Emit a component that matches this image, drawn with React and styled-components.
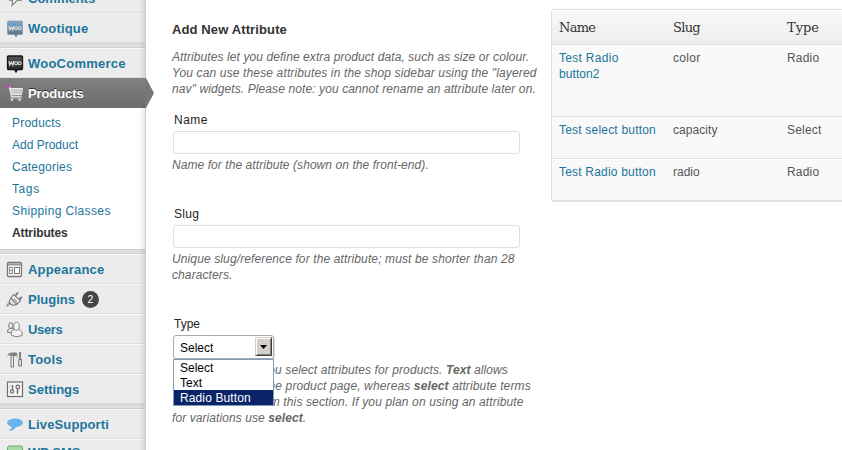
import React from "react";
import styled, { createGlobalStyle, css } from "styled-components";

const Global = createGlobalStyle`
  * { box-sizing: border-box; }
  html, body { margin: 0; background: #fff; overflow: hidden; }
  body { font-family: "Liberation Sans", Arial, sans-serif; font-size: 12px; color: #333; }
`;

const Page = styled.div`
  display: flex;
  width: 842px;
  height: 450px;
  overflow: hidden;
`;

const Sidebar = styled.nav`
  flex: none;
  position: relative;
  width: 146px;
  height: 467px;
  margin-top: -17px;
  background: #ececec;
  border-right: 1px solid #ccc;
  &::after {
    content: "";
    position: absolute;
    top: 0;
    right: 0;
    bottom: 0;
    width: 6px;
    background: linear-gradient(to right, rgba(0, 0, 0, 0), rgba(0, 0, 0, 0.09));
  }
`;

const Item = styled.a`
  display: flex;
  align-items: center;
  height: 30px;
  padding: ${(p) => (p.$raised ? "0 0 2px 6px" : "1px 0 0 6px")};
  border-top: 1px solid #f9f9f9;
  border-bottom: 1px solid #dfdfdf;
  font-size: 13px;
  font-weight: bold;
  line-height: 18px;
  color: #21759b;
  white-space: nowrap;
  svg { flex: none; width: 18px; height: 18px; margin-right: 4px; }
  ${(p) =>
    p.$current &&
    css`
      position: relative;
      z-index: 1;
      color: #fff;
      border-color: #808080 #777 #6d6d6d;
      background: linear-gradient(#808080, #6d6d6d);
      text-shadow: 0 -1px 0 #333;
    `}
`;

const Label = styled.span`
  letter-spacing: ${(p) => p.$ls || 0}px;
`;

const Arrow = styled.svg`
  && {
    position: absolute;
    left: 145px;
    top: -1px;
    width: 10px;
    height: 30px;
    margin: 0;
  }
`;

const Separator = styled.div`
  height: 5px;
  border-top: 1px solid #d0d0d0;
  border-bottom: 1px solid #d0d0d0;
  background: #dfdfdf;
`;

const Badge = styled.span`
  width: 17px;
  height: 17px;
  margin-left: 7px;
  border-radius: 9px;
  background: #464646;
  color: #fff;
  font-size: 10.5px;
  font-weight: normal;
  line-height: 17px;
  text-align: center;
`;

const Submenu = styled.div`
  height: 141px;
  padding: 4px 0 0 12px;
  background: #fff;
`;

const SubLink = styled.a`
  display: block;
  height: 22px;
  line-height: 22px;
  font-size: 12px;
  white-space: nowrap;
  letter-spacing: ${(p) => p.$ls || 0}px;
  color: ${(p) => (p.$active ? "#333" : "#21759b")};
  font-weight: ${(p) => (p.$active ? "bold" : "normal")};
`;

const Form = styled.main`
  flex: none;
  width: 405px;
  padding: 21px 0 0 26px;
`;

const Title = styled.h3`
  margin: 0;
  height: 28px;
  line-height: 17px;
  font-size: 13px;
  color: #333;
  letter-spacing: 0.12px;
`;

const Description = styled.div`
  font-style: italic;
  color: #666;
`;

const Line = styled.div`
  height: 16px;
  padding-left: ${(p) => p.$indent || 0}px;
  line-height: 16px;
  white-space: nowrap;
  letter-spacing: ${(p) => p.$ls || 0}px;
`;

const Field = styled.div`
  height: ${(p) => p.$h}px;
  padding-top: 15px;
`;

const FieldLabel = styled.label`
  display: block;
  height: 19px;
  padding-left: 2px;
  line-height: 16px;
  color: #222;
  letter-spacing: ${(p) => p.$ls || 0}px;
`;

const Input = styled.input`
  display: block;
  width: 347px;
  height: 23px;
  margin: 0 0 3px 1px;
  padding: 2px;
  border: 1px solid #dfdfdf;
  border-radius: 3px;
  background: #fff;
  outline: none;
`;

const Select = styled.div`
  position: relative;
  display: flex;
  justify-content: space-between;
  width: 101px;
  height: 24px;
  margin: 0 0 3px 1px;
  padding: 1px 1px 1px 6px;
  border: 1px solid #aaa;
  border-radius: 3px;
  background: #fff;
  color: #000;
  line-height: 22px;
  box-shadow: 1px 1px 1px #ddd;
`;

const SelectButton = styled.span`
  display: flex;
  align-items: center;
  justify-content: center;
  width: 17px;
  height: 19px;
  background: #d4d0c8;
  border: 1px solid;
  border-color: #d4d0c8 #404040 #404040 #d4d0c8;
  box-shadow: inset 1px 1px 0 #fff, inset -1px -1px 0 #808080;
`;

const Options = styled.div`
  position: absolute;
  z-index: 2;
  left: -1px;
  top: 23px;
  width: 101px;
  height: 47px;
  border: 1px solid #7f9db9;
  background: #fff;
`;

const Option = styled.div`
  height: 15px;
  padding-left: 6px;
  line-height: 16px;
  letter-spacing: ${(p) => p.$ls || 0}px;
  color: ${(p) => (p.$on ? "#fff" : "#000")};
  background: ${(p) => (p.$on ? "#0a246a" : "transparent")};
`;

const Table = styled.section`
  flex: none;
  width: 310px;
  height: 193px;
  margin-top: 9px;
  border: 1px solid #dfdfdf;
  border-bottom-width: 2px;
  border-radius: 3px;
  background: #f9f9f9;
  overflow: hidden;
`;

const Row = styled.div`
  display: grid;
  grid-template-columns: 114px 114px 1fr;
  height: ${(p) => p.$h}px;
  padding: 4px 0 0 7px;
  border-top: 1px solid #fff;
  border-bottom: ${(p) => (p.$last ? "none" : "1px solid #dfdfdf")};
  line-height: 16px;
  color: #555;
  white-space: nowrap;
`;

const Header = styled(Row)`
  padding-top: 9px;
  background: linear-gradient(#f9f9f9, #ececec);
  font-family: "DejaVu Serif", Georgia, serif;
  font-size: 13px;
  color: #333;
`;

const Cell = styled.div`
  letter-spacing: ${(p) => p.$ls || 0}px;
  color: ${(p) => (p.$link ? "#21759b" : "inherit")};
`;

const Bubble = () => (
  <svg viewBox="0 0 18 18" fill="#f7f7f7" stroke="#888" strokeWidth="1.2">
    <path d="M5 3h9q3 0 3 3.500t-3 4h-3l-5 5 .5-5H5q-3 0-3-4T5 3z" />
  </svg>
);
const Woo = ({ dark }) => (
  <svg viewBox="0 0 18 18">
    <defs>
      <linearGradient id={dark ? "wd" : "wl"} x1="0" y1="0" x2="0" y2="1">
        <stop offset="0" stopColor={dark ? "#555" : "#79aad2"} />
        <stop offset="1" stopColor={dark ? "#222" : "#5f6a74"} />
      </linearGradient>
    </defs>
    <path
      d="M2.500 1h13q1 0 1 1v11.500q0 1-1 1H11.500L10 17l-1.500-2.500h-6q-1 0-1-1V2q0-1 1-1z"
      fill={`url(#${dark ? "wd" : "wl"})`}
      stroke={dark ? "#151515" : "#7d92a3"}
      strokeWidth={dark ? 1.3 : 0.6}
    />
    <path d="M2.800 6l1 4 1.500-3 1.500 3 1-4" fill="none" stroke="#ddd" strokeWidth="1.200" />
    <circle cx="10" cy="8.300" r="1.500" fill="none" stroke="#ddd" strokeWidth="1.100" />
    <circle cx="13.700" cy="8.300" r="1.500" fill="none" stroke="#ddd" strokeWidth="1.100" />
  </svg>
);
const Cart = () => (
  <svg viewBox="0 0 18 18" fill="none">
    <path d="M1.500 2.500h2l2 9h10" stroke="#ddd" strokeWidth="1.300" />
    <path d="M4 3.500h12.500L15.500 9.500H5.500z" fill="#bbb" stroke="#eee" />
    <path d="M5 5.500h11M5.500 7.500h10M7 4v5M9 4v5M11 4v5M13 4v5" stroke="#e8e8e8" strokeWidth=".8" strokeDasharray="1 1" />
    <path d="M4 13h12" stroke="#ccc" />
    <circle cx="6" cy="14.700" r="1.200" fill="#ddd" />
    <circle cx="13.500" cy="14.700" r="1.200" fill="#ddd" />
    <path d="M0 0h3v3H0z" fill="#c5479d" />
  </svg>
);
const Appearance = () => (
  <svg viewBox="0 0 18 18" fill="none" stroke="#777" strokeWidth="1">
    <rect x="1.500" y="1.500" width="14" height="14" rx="1" fill="#f6f6f6" strokeWidth="1.300" />
    <path d="M2 3.500h13" stroke="#999" strokeWidth="2" />
    <path d="M3 6.500h4M3 9.500h4M3 12.500h4M3.500 6v7M6.500 6v7" stroke="#888" strokeWidth=".9" />
    <rect x="8.500" y="6.500" width="5" height="6" fill="#fff" />
  </svg>
);
const Plug = () => (
  <svg viewBox="0 0 18 18" fill="none" stroke="#777" strokeWidth="1.100">
    <path d="M1 15.500q1-3.500 4-3.500" strokeWidth="2" stroke="#999" />
    <path d="M5 7l6 6q-4 2.500-6.500 0T5 7z" fill="#e6e6e6" />
    <path d="M5 7l2.500-3.500 7 6L11 13z" fill="#f8f8f8" />
    <path d="M9.500 4.500L12 1.500M13 8.500L16 6" strokeWidth="1.800" />
    <path d="M8 7.500l3 3M7 10l2 2" stroke="#aaa" />
  </svg>
);
const Users = () => (
  <svg viewBox="0 0 18 18" fill="#e6e6e6" stroke="#808080">
    <path d="M4 7.500Q1 8 1.500 11.500h6v-4z" />
    <ellipse cx="4.800" cy="4.500" rx="2.100" ry="2.900" />
    <path d="M8 8.500q-3.500 1.500-2.500 6 5.500 2.500 10.500 0 1-4.500-3-6z" fill="#f6f6f6" />
    <ellipse cx="10.500" cy="5.300" rx="2.700" ry="4.100" fill="#f6f6f6" />
  </svg>
);
const Tools = () => (
  <svg viewBox="0 0 18 18" fill="none" stroke="#777">
    <path d="M1.500 4.500Q3 1.500 7 2h3.500v2.500H7.500" fill="#8c8c8c" />
    <path d="M5 4.500h2.500V16H5z" fill="#eee" />
    <path d="M14 1v7" strokeWidth="1.800" />
    <path d="M12.700 8.500h2.800v6.500h-2.800z" fill="#ddd" />
    <path d="M11.200 3v4" stroke="#aaa" />
  </svg>
);
const Settings = () => (
  <svg viewBox="0 0 18 18" fill="none" stroke="#6f6f6f">
    <rect x="1.500" y="1" width="15" height="14.500" fill="#f7f7f7" strokeWidth="1.200" />
    <path d="M6.500 4v5M11.500 8v5" strokeWidth="1.500" />
    <circle cx="6" cy="10.500" r="1.600" strokeWidth="1.300" />
    <circle cx="11.800" cy="6" r="1.800" strokeWidth="1.300" />
    <path d="M4 4v3" stroke="#ccc" />
  </svg>
);
const Chat = () => (
  <svg viewBox="0 0 18 18" fill="#67b5ef">
    <ellipse cx="9" cy="6.700" rx="8" ry="4.200" />
    <path d="M5 9q2 3-2.500 6 6 0 8-5z" />
  </svg>
);
const Sms = () => (
  <svg viewBox="0 0 18 18">
    <rect x="1.500" y="2" width="15" height="14" rx="2" fill="#a8dba5" stroke="#6aa86a" />
  </svg>
);

const attributes = [
  { name: [["Test Radio", 0.3], ["button2", 0.08]], slug: "color", slugLs: 0.3, type: "Radio", h: 72 },
  { name: [["Test select button", 0.2]], slug: "capacity", slugLs: 0.06, type: "Select", h: 42 },
  { name: [["Test Radio button", 0.2]], slug: "radio", slugLs: 0, type: "Radio", h: 41 },
];

export default function App() {
  return (
    <Page>
      <Global />
      <Sidebar>
        <Item><Bubble /><Label>Comments</Label></Item>
        <Item><Woo /><Label $ls={0.17}>Wootique</Label></Item>
        <Separator />
        <Item><Woo dark /><Label $ls={0.23}>WooCommerce</Label></Item>
        <Item $current>
          <Cart /><Label $ls={-0.1}>Products</Label>
          <Arrow viewBox="0 0 10 30"><path d="M0 0h1l8 15-8 15H0z" fill="#777" /></Arrow>
        </Item>
        <Submenu>
          <SubLink $ls={0.2}>Products</SubLink>
          <SubLink>Add Product</SubLink>
          <SubLink $ls={0.22}>Categories</SubLink>
          <SubLink $ls={0.6}>Tags</SubLink>
          <SubLink $ls={0.38}>Shipping Classes</SubLink>
          <SubLink $active $ls={-0.1}>Attributes</SubLink>
        </Submenu>
        <Separator />
        <Item><Appearance /><Label $ls={0.2}>Appearance</Label></Item>
        <Item><Plug /><Label>Plugins</Label><Badge>2</Badge></Item>
        <Item><Users /><Label $ls={-0.35}>Users</Label></Item>
        <Item><Tools /><Label $ls={0.2}>Tools</Label></Item>
        <Item><Settings /><Label>Settings</Label></Item>
        <Separator />
        <Item><Chat /><Label $ls={0.13}>LiveSupporti</Label></Item>
        <Item $raised><Sms /><Label>WP SMS</Label></Item>
      </Sidebar>

      <Form>
        <Title>Add New Attribute</Title>
        <Description>
          <Line $ls={0.09}>Attributes let you define extra product data, such as size or colour.</Line>
          <Line $ls={0.14}>You can use these attributes in the shop sidebar using the "layered</Line>
          <Line $ls={0.1}>nav" widgets. Please note: you cannot rename an attribute later on.</Line>
        </Description>
        <Field $h={94}>
          <FieldLabel $ls={0.5}>Name</FieldLabel>
          <Input />
          <Description><Line $ls={0.07}>Name for the attribute (shown on the front-end).</Line></Description>
        </Field>
        <Field $h={110}>
          <FieldLabel $ls={0.3}>Slug</FieldLabel>
          <Input />
          <Description>
            <Line $ls={0.12}>Unique slug/reference for the attribute; must be shorter than 28</Line>
            <Line $ls={0.1}>characters.</Line>
          </Description>
        </Field>
        <Field $h={120}>
          <FieldLabel>Type</FieldLabel>
          <Select>
            Select
            <SelectButton>
              <svg width="7" height="4" viewBox="0 0 7 4"><path d="M0 0h7L3.500 4z" /></svg>
            </SelectButton>
            <Options>
              <Option>Select</Option>
              <Option>Text</Option>
              <Option $on $ls={0.12}>Radio Button</Option>
            </Options>
          </Select>
          <Description>
            <Line $indent={2} $ls={0.1}>
              <Label $ls={-0.12}>Determines how </Label>you select attributes for products. <b>Text</b> allows
            </Line>
            <Line $indent={2} $ls={0.13}>
              <Label $ls={-0.02}>manual entry via </Label>the product page, whereas <b>select</b> attribute terms
            </Line>
            <Line $indent={2} $ls={0.13}>
              <Label $ls={-0.05}>can be defined </Label>from this section. If you plan on using an attribute
            </Line>
            <Line $ls={0.08}>for variations use <b>select</b>.</Line>
          </Description>
        </Field>
      </Form>

      <Table>
        <Header $h={35}>
          <Cell $ls={-0.7}>Name</Cell><Cell $ls={-0.7}>Slug</Cell><Cell>Type</Cell>
        </Header>
        {attributes.map((a, i) => (
          <Row key={i} $h={a.h} $last={i === attributes.length - 1}>
            <div>
              {a.name.map(([text, ls]) => <Cell key={text} $link $ls={ls}>{text}</Cell>)}
            </div>
            <Cell $ls={a.slugLs}>{a.slug}</Cell>
            <Cell $ls={0.2}>{a.type}</Cell>
          </Row>
        ))}
      </Table>
    </Page>
  );
}
